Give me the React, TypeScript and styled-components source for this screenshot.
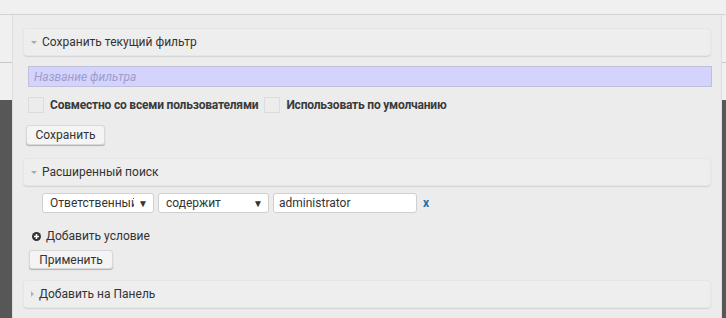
import { FC } from 'react';
import styled, { createGlobalStyle } from 'styled-components';

const GlobalStyle = createGlobalStyle`
    html, body {
        margin: 0;
        padding: 0;
        background: #f0f0f0;
        font-family: Roboto, "Liberation Sans", sans-serif;
        font-size: 12px;
        color: #333;
    }
`;

const Page = styled.div`
    width: 726px;
    height: 318px;
    overflow: hidden;
    display: flex;
    flex-direction: column;
`;

const TopBar = styled.div`
    height: 14px;
    flex: none;
    background: #f0f0f0;
    border-bottom: 1px solid #d2d2d2;
`;

const Body = styled.div`
    flex: 1;
    display: grid;
    grid-template-columns: 12px 710px 4px;
    min-height: 0;
`;

const Backdrop = styled.div`
    display: flex;
    flex-direction: column;
`;

const BackdropLight = styled.div<{ $h: number; $line?: boolean }>`
    height: ${p => p.$h}px;
    flex: none;
    background: #f0f0f0;
    border-bottom: ${p => (p.$line ? '1px solid #c8c8c8' : 'none')};
`;

const BackdropDark = styled.div`
    flex: 1;
    background: #575757;
`;

const Panel = styled.div`
    background: #ececec;
    border-left: 1px solid #dcdcdc;
    border-right: 1px solid #dcdcdc;
    padding: 14px 11px 0 11px;
    display: flex;
    flex-direction: column;
    min-height: 0;
    overflow: hidden;
`;

const Header = styled.div`
    height: 26px;
    flex: none;
    display: flex;
    align-items: center;
    gap: 5px;
    padding-left: 7px;
    background: #eeeeee;
    border-radius: 3px;
    box-shadow: 0 0 0 1px #e6e6e6, 0 1px 2px rgba(0, 0, 0, 0.35);
    color: #333;
    font-size: 12px;
`;

const Caret = styled.span<{ $open: boolean }>`
    width: 0;
    height: 0;
    ${p => p.$open
        ? `border-left: 3px solid transparent;
           border-right: 3px solid transparent;
           border-top: 3px solid #a8a8a8;`
        : `border-top: 3px solid transparent;
           border-bottom: 3px solid transparent;
           border-left: 3px solid #b4b4b4;`}
`;

const Section = styled.div<{ $top: number; $left?: number }>`
    margin-top: ${p => p.$top}px;
    margin-left: ${p => p.$left ?? 0}px;
    flex: none;
`;

const NameInput = styled.div`
    height: 19px;
    width: 677px;
    background: #d3d3fd;
    border: 1px solid #c0c0d8;
    display: flex;
    align-items: center;
    padding-left: 5px;
    box-sizing: content-box;
    font-style: italic;
    color: #9d9dcc;
`;

const CheckRow = styled.div`
    display: flex;
    align-items: center;
    gap: 6px;
    height: 16px;
    font-weight: 700;
    letter-spacing: -0.2px;
    color: #3a3a3a;
`;

const CheckBox = styled.span`
    width: 14px;
    height: 14px;
    border: 1px solid #dcdcdc;
    background: #ececec;
    display: inline-block;
`;

const Button = styled.div<{ $w: number; $h: number }>`
    width: ${p => p.$w}px;
    height: ${p => p.$h}px;
    box-sizing: border-box;
    display: flex;
    align-items: center;
    justify-content: center;
    background: #f4f4f4;
    border: 1px solid #d8d8d8;
    border-radius: 3px;
    box-shadow: 0 1px 1px rgba(0, 0, 0, 0.25);
    color: #333;
`;

const ConditionRow = styled.div`
    display: flex;
    align-items: center;
    gap: 4px;
`;

const Select = styled.div<{ $w: number }>`
    width: ${p => p.$w}px;
    height: 20px;
    box-sizing: border-box;
    background: #fff;
    border: 1px solid #cfcfcf;
    border-radius: 3px;
    display: flex;
    align-items: center;
    padding: 0 5px 0 7px;
    overflow: hidden;
`;

const SelectText = styled.span`
    flex: 1;
    white-space: nowrap;
    overflow: hidden;
    color: #333;
`;

const SelectArrow = styled.span`
    font-size: 10px;
    color: #333;
    margin-left: 4px;
`;

const TextBox = styled.div`
    width: 144px;
    height: 20px;
    box-sizing: border-box;
    background: #fff;
    border: 1px solid #cfcfcf;
    border-radius: 3px;
    display: flex;
    align-items: center;
    padding-left: 5px;
    color: #333;
`;

const Remove = styled.span`
    margin-left: 2px;
    color: #1f70a8;
    font-weight: 700;
    font-size: 12px;
`;

const AddLink = styled.div`
    display: flex;
    align-items: center;
    gap: 5px;
    height: 14px;
    color: #333;
`;

const PlusIcon: FC = () => (
    <svg width="9" height="9" viewBox="0 0 9 9">
        <circle cx="4.5" cy="4.5" r="4.5" fill="#333" />
        <path d="M4.5 2v5M2 4.5h5" stroke="#fff" strokeWidth="1.6" />
    </svg>
);

export default function App() {
    return (
        <Page>
            <GlobalStyle />
            <TopBar />
            <Body>
                <Backdrop>
                    <BackdropLight $h={47} $line />
                    <BackdropLight $h={37} />
                    <BackdropDark />
                </Backdrop>
                <Panel>
                    <Header>
                        <Caret $open />
                        Сохранить текущий фильтр
                    </Header>
                    <Section $top={11} $left={4}>
                        <NameInput>Название фильтра</NameInput>
                    </Section>
                    <Section $top={10} $left={4}>
                        <CheckRow>
                            <CheckBox />
                            <span>Совместно со всеми пользователями</span>
                            <CheckBox />
                            <span>Использовать по умолчанию</span>
                        </CheckRow>
                    </Section>
                    <Section $top={12} $left={2}>
                        <Button $w={79} $h={20}>Сохранить</Button>
                    </Section>
                    <Section $top={14}>
                        <Header>
                            <Caret $open />
                            Расширенный поиск
                        </Header>
                    </Section>
                    <Section $top={8} $left={18}>
                        <ConditionRow>
                            <Select $w={112}>
                                <SelectText>Ответственный</SelectText>
                                <SelectArrow>▼</SelectArrow>
                            </Select>
                            <Select $w={111}>
                                <SelectText>содержит</SelectText>
                                <SelectArrow>▼</SelectArrow>
                            </Select>
                            <TextBox>administrator</TextBox>
                            <Remove>x</Remove>
                        </ConditionRow>
                    </Section>
                    <Section $top={16} $left={8}>
                        <AddLink>
                            <PlusIcon />
                            Добавить условие
                        </AddLink>
                    </Section>
                    <Section $top={7} $left={5}>
                        <Button $w={84} $h={19}>Применить</Button>
                    </Section>
                    <Section $top={12}>
                        <Header>
                            <Caret $open={false} />
                            Добавить на Панель
                        </Header>
                    </Section>
                </Panel>
                <Backdrop>
                    <BackdropLight $h={47} $line />
                    <BackdropLight $h={37} />
                    <BackdropDark />
                </Backdrop>
            </Body>
        </Page>
    );
}
